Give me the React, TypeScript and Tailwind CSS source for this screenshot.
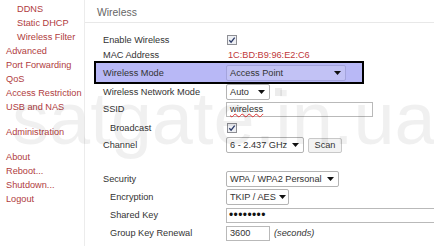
import type { ReactNode } from "react"

const nav = [
  { label: "DDNS", sub: true },
  { label: "Static DHCP", sub: true },
  { label: "Wireless Filter", sub: true },
  { label: "Advanced" },
  { label: "Port Forwarding" },
  { label: "QoS" },
  { label: "Access Restriction" },
  { label: "USB and NAS", gap: true },
  { label: "Administration", gap: true },
  { label: "About" },
  { label: "Reboot..." },
  { label: "Shutdown..." },
  { label: "Logout" },
]

function Arrow() {
  return (
    <svg width="7" height="4" viewBox="0 0 7 4" className="shrink-0">
      <path d="M0 0h7L3.5 4z" fill="#111" />
    </svg>
  )
}

function Select({ value, width, hl = false }: { value: string; width: string; hl?: boolean }) {
  return (
    <div
      className={`flex h-[16px] shrink-0 items-center justify-between gap-[3px] rounded-[2px] border pl-[3px] pr-[4px] leading-[12px] ${width} ${
        hl ? "border-[#a4a4dc] bg-[#c2c2f5]" : "border-[#b4b4b4] bg-white"
      }`}
    >
      <span className="whitespace-nowrap">{value}</span>
      <Arrow />
    </div>
  )
}

function Check() {
  return (
    <svg width="10" height="10" viewBox="0 0 10 10" className="ml-[1px]">
      <rect x="0.5" y="0.5" width="9" height="9" fill="#eef0f4" stroke="#8e8f94" />
      <path d="M2.3 5.2l1.8 2L7.7 2.6" fill="none" stroke="#2b3a67" strokeWidth="1.3" />
    </svg>
  )
}

function Row({ label, h, sub = false, children }: { label: string; h: string; sub?: boolean; children?: ReactNode }) {
  return (
    <div className={`flex items-center leading-[12px] ${h} ${sub ? "pl-[25px]" : "pl-[18px]"}`}>
      <div className={sub ? "w-[116px] shrink-0" : "w-[123px] shrink-0"}>{label}</div>
      {children}
    </div>
  )
}

export default function App() {
  return (
    <div className="relative flex h-[246px] w-[434px] overflow-hidden bg-white font-['Liberation_Sans',Arial,sans-serif] text-[9.2px] text-[#333]">
      {/* Sidebar */}
      <nav className="w-[85px] shrink-0 border-r border-[#ececec] pt-[2px] leading-[14px] text-[#b03c40]">
        {nav.map((n) => (
          <div key={n.label} className={`${n.sub ? "pl-[17px]" : "pl-[6px]"} ${n.gap ? "mb-[11px]" : ""} whitespace-nowrap`}>
            {n.label}
          </div>
        ))}
      </nav>

      {/* Content */}
      <main className="flex-1 overflow-hidden">
        <div className="h-[23px] border-b border-[#e8e8e8] pl-[12px] pt-[7px] text-[10.4px] leading-[12px] text-[#666]">
          Wireless
        </div>

        <div className="mt-[9px]">
          <Row label="Enable Wireless" h="h-[16px]">
            <Check />
          </Row>
          <Row label="MAC Address" h="h-[13px]">
            <span className="pl-[2px] text-[#c0393b]">1C:BD:B9:96:E2:C6</span>
          </Row>

          <div className="ml-[9px] flex h-[23px] w-[270px] items-center border-2 border-black bg-[#b8b8f6] pl-[7px] leading-[12px]">
            <div className="w-[123px] shrink-0">Wireless Mode</div>
            <Select value="Access Point" width="w-[120px]" hl />
          </div>

          <Row label="Wireless Network Mode" h="h-[15px]">
            <Select value="Auto" width="w-[44px]" />
            <div className="ml-[5px] h-[8px] w-[7px] bg-[#ececec]" />
          </Row>
          <Row label="SSID" h="h-[20px]">
            <div className="flex h-[15px] w-[147px] items-center border border-[#b9b9b9] pl-[3px]">
              <span className="underline decoration-[#e0302f] decoration-wavy decoration-[0.8px] underline-offset-[1px]">
                wireless
              </span>
            </div>
          </Row>
          <Row label="Broadcast" h="h-[17px]" sub>
            <Check />
          </Row>
          <Row label="Channel" h="h-[18px]">
            <Select value="6 - 2.437 GHz" width="w-[78px]" />
            <button className="ml-[4px] flex h-[15px] w-[34px] items-center justify-center rounded-[2px] border border-[#c8c8c8] bg-[#f3f3f3] text-[#333]">
              Scan
            </button>
          </Row>

          <div className="mt-[16px]">
            <Row label="Security" h="h-[18px]">
              <Select value="WPA / WPA2 Personal" width="w-[113px]" />
            </Row>
            <Row label="Encryption" h="h-[18px]" sub>
              <Select value="TKIP / AES" width="w-[63px]" />
            </Row>
            <Row label="Shared Key" h="h-[18px]" sub>
              <div className="flex h-[15px] w-[230px] shrink-0 items-center border border-[#b9b9b9] pl-[2px] text-[12px] tracking-[0.4px] text-[#111]">
                ••••••••
              </div>
            </Row>
            <Row label="Group Key Renewal" h="h-[18px]" sub>
              <div className="flex h-[15px] w-[44px] items-center border border-[#b9b9b9] pl-[3px]">3600</div>
              <span className="ml-[4px] italic">(seconds)</span>
            </Row>
          </div>
        </div>
      </main>

      {/* watermark */}
      <div className="pointer-events-none absolute left-[12px] top-[82px] whitespace-nowrap text-[74px] leading-none text-black/[0.06]">
        satgate.in.ua
      </div>
    </div>
  )
}
